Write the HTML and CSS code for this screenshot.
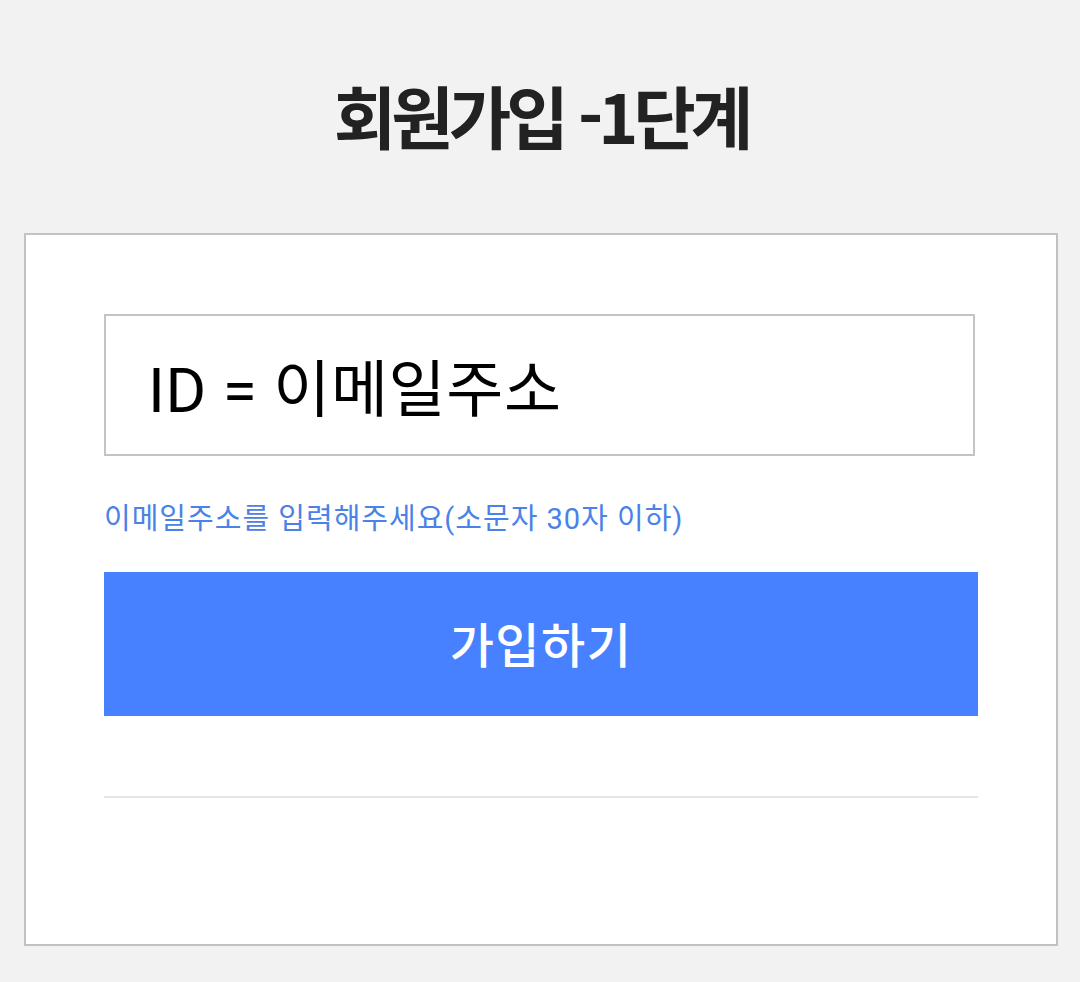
FILE: index.html
```html
<!DOCTYPE html>
<html lang="ko">
<head>
    <meta charset="utf-8">
    <title>회원가입 -1단계</title>
    <link rel="stylesheet" href="styles.css">
</head>
<body>
    <h1 class="page-title">회원가입 -1단계</h1>
    <div class="join-card">
        <div class="id-field">ID = 이메일주소</div>
        <p class="id-help">이메일주소를 입력해주세요(소문자 30자 이하)</p>
        <button class="join-btn">가입하기</button>
        <hr class="join-line">
    </div>
</body>
</html>
```

FILE: styles.css
```css
body {
    margin: 0;
    padding: 0 22px 0 24px;
    background: #f2f2f2;
    font-family: "Noto Sans", "Noto Sans CJK KR", sans-serif;
}
.page-title {
    margin: 0;
    height: 233px;
    display: flex;
    align-items: center;
    justify-content: center;
    padding-bottom: 4px;
    box-sizing: border-box;
    font-family: "Noto Sans CJK KR", sans-serif;
    font-size: 68px;
    font-weight: 700;
    letter-spacing: -5px;
    color: #222;
}
.join-card {
    background: #fff;
    border: 2px solid #c2c2c2;
    padding: 79px 78px 146px;
}
.id-field {
    width: 871px;
    height: 142px;
    box-sizing: border-box;
    border: 2px solid #c4c4c4;
    display: flex;
    align-items: center;
    padding-left: 42px;
    font-family: Roboto, "Noto Sans CJK KR", sans-serif;
    font-size: 62px;
    letter-spacing: 0.6px;
    color: #000;
}
.id-help {
    margin: 46px 0 36px;
    font-family: Roboto, "Noto Sans CJK KR", sans-serif;
    font-size: 29px;
    line-height: 34px;
    letter-spacing: 1px;
    color: #4a82e8;
}
.join-btn {
    display: block;
    width: 100%;
    height: 144px;
    border: none;
    background: #4781ff;
    color: #fff;
    font-family: "Noto Sans CJK KR", sans-serif;
    font-size: 48px;
    font-weight: 500;
    letter-spacing: 1.5px;
    padding: 0 0 4px;
}
.join-line {
    margin: 80px 0 0;
    border: none;
    height: 2px;
    background: #e6e6e6;
}
```
